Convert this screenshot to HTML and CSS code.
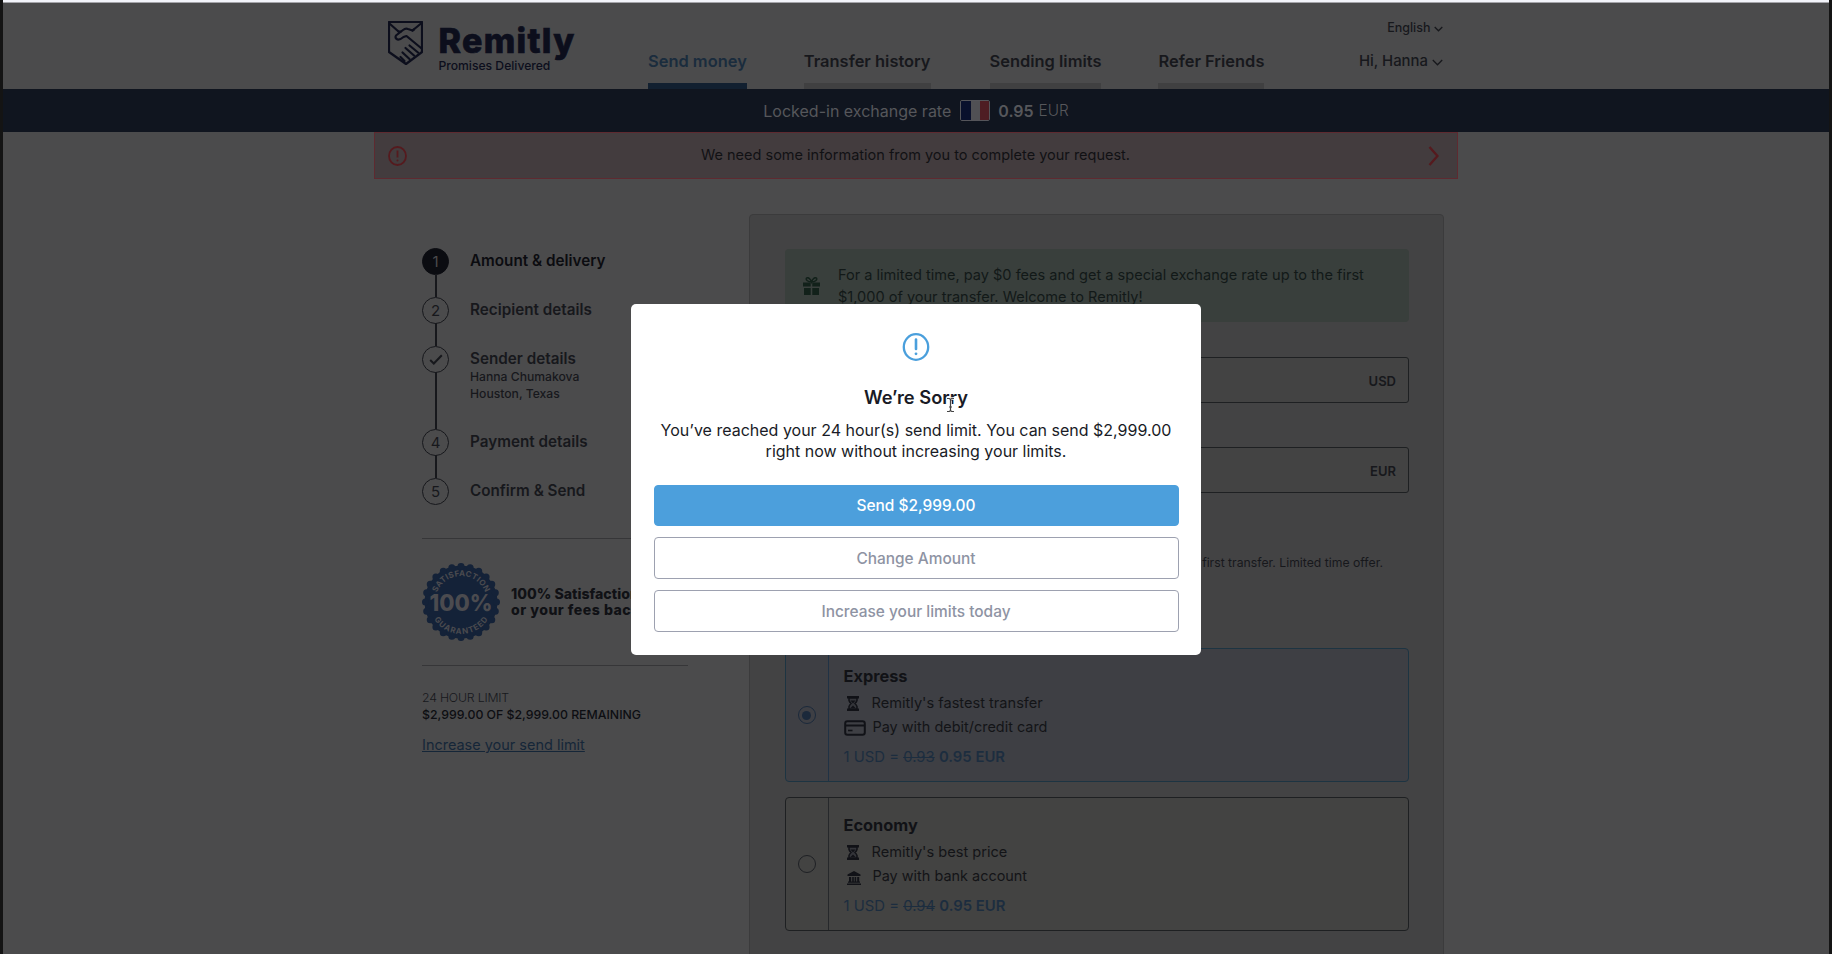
FILE: index.html
```html
<!DOCTYPE html>
<html lang="en">
<head>
<meta charset="utf-8">
<title>Remitly – Send money</title>
<link rel="stylesheet" href="styles.css">
</head>
<body>
<div class="page">
  <header class="header">
    <a class="logo">
      <svg class="logo-mark" viewBox="0 0 35 44" fill="none" stroke="#0c0e1c" stroke-width="2.200" stroke-linejoin="round" stroke-linecap="round">
        <path d="M1 1H34V31L18 43L1 31Z"/>
        <path d="M2 3L10.500 10.500M33 2.500L24.500 9.500L20 8Q17.500 7 15 9L8 14.500Q6.500 17 9.500 18.500Q12 19 15.500 16L18.500 15L33 27"/>
        <path d="M10.500 10.500L13 10.500M24.500 9.500L26 8.500M21.500 24.500L30 31.500M17.500 27L26 34.500M14.500 31.500L21.500 38M12.500 36L16.500 40"/>
      </svg>
      <span class="logo-text"><span class="logo-name">Remitly</span><span class="logo-tag">Promises Delivered</span></span>
    </a>
    <nav class="nav">
      <a class="nav-item active">Send money</a>
      <a class="nav-item">Transfer history</a>
      <a class="nav-item">Sending limits</a>
      <a class="nav-item">Refer Friends</a>
    </nav>
    <div class="account">
      <div class="language">English<svg viewBox="0 0 9 6" width="9" height="6" class="caret"><path d="M.7 1L4.500 4.800L8.300 1"/></svg></div>
      <div class="user">Hi, Hanna<svg viewBox="0 0 11 7" width="11" height="7" class="caret"><path d="M.8 1L5.500 5.800L10.200 1"/></svg></div>
    </div>
  </header>

  <div class="rate"><span class="rate-label">Locked-in exchange rate</span><span class="flag"><i class="blue"></i><i class="white"></i><i class="red"></i></span><b>0.95</b><span class="rate-cur">EUR</span></div>

  <div class="alert">
    <svg width="19" height="20" viewBox="0 0 19 20"><ellipse cx="9.500" cy="10" rx="8.500" ry="9" fill="none" stroke="#551a1e" stroke-width="1.800"/><path d="M9.500 4.500V11.500" stroke="#551a1e" stroke-width="1.800"/><circle cx="9.500" cy="14.500" r="1" fill="#551a1e"/></svg>
    <span class="alert-text">We need some information from you to complete your request.</span>
    <svg width="11" height="20" viewBox="0 0 11 20"><path d="M1.500 1L9.500 10L1.500 19" fill="none" stroke="#551a1e" stroke-width="2.400"/></svg>
  </div>

  <main class="main">
    <aside class="side">
      <ol class="steps">
        <li class="step current"><span class="num">1</span><div class="step-body"><h3>Amount &amp; delivery</h3></div></li>
        <li class="step"><span class="num">2</span><div class="step-body"><h3>Recipient details</h3></div></li>
        <li class="step tall"><span class="num"><svg width="14" height="11" viewBox="0 0 14 11"><path d="M1.200 6L4.800 9.500L12.800 1.200" fill="none" stroke="#17181c" stroke-width="2"/></svg></span><div class="step-body"><h3>Sender details</h3><p>Hanna Chumakova<br>Houston, Texas</p></div></li>
        <li class="step"><span class="num">4</span><div class="step-body"><h3>Payment details</h3></div></li>
        <li class="step last"><span class="num">5</span><div class="step-body"><h3>Confirm &amp; Send</h3></div></li>
      </ol>
      <div class="guarantee">
        <svg class="badge" viewBox="0 0 78 78" width="78" height="78">
          <defs>
            <path id="arcTop" d="M13 39A26 26 0 0 1 65 39"/>
            <path id="arcBottom" d="M7 39A32 32 0 0 0 71 39"/>
          </defs>
          <circle cx="39" cy="39" r="36.500" fill="#142238"/>
          <circle cx="39" cy="39" r="35.500" fill="none" stroke="#142238" stroke-width="7" stroke-linecap="round" pathLength="24" stroke-dasharray="0 1"/>
          <g fill="#4b4b4f" text-anchor="middle" class="badge-text">
            <text x="39" y="47.500" class="badge-num" textLength="63" lengthAdjust="spacingAndGlyphs">100%</text>
            <text class="badge-arc"><textPath href="#arcTop" startOffset="50%" textLength="62">SATISFACTION</textPath></text>
            <text class="badge-arc"><textPath href="#arcBottom" startOffset="50%" textLength="64">GUARANTEED</textPath></text>
          </g>
        </svg>
        <p>100% Satisfaction<br><span class="wide">or your fees back</span></p>
      </div>
      <div class="limit">
        <span class="limit-label">24 HOUR LIMIT</span>
        <span class="limit-value">$2,999.00 OF $2,999.00 REMAINING</span>
        <a class="limit-link">Increase your send limit</a>
      </div>
    </aside>

    <section class="card">
      <div class="promo">
        <svg width="17" height="18" viewBox="0 0 17 18" fill="#12211a"><path d="M0 5.500H7.700V9.500H0ZM9.300 5.500H17V9.500H9.300ZM1 11H7.700V18H1ZM9.300 11H16V18H9.300Z"/><path d="M8.500 5C5 5 2.500 3 3.500 1.200C5 -.3 7.500 2 8.500 5C9.500 2 12 -.3 13.500 1.200C14.500 3 12 5 8.500 5" fill="none" stroke="#12211a" stroke-width="1.500"/></svg>
        <p>For a limited time, pay $0 fees and get a special exchange rate up to the first $1,000 of your transfer. Welcome to Remitly!</p>
      </div>
      <div class="field send">USD</div>
      <div class="field receive">EUR</div>
      <p class="offer">Special rate on your first transfer. Limited time offer.</p>

      <div class="option selected">
        <div class="pick"><span class="radio"></span></div>
        <div class="option-body">
          <h2>Express</h2>
          <div class="line"><svg class="hourglass" width="12" height="15" viewBox="0 0 12 15"><use href="#hourglass"/></svg><span>Remitly's fastest transfer</span></div>
          <div class="line pay"><svg class="cardicon" width="22" height="16" viewBox="0 0 22 16"><rect x="1.200" y="1.200" width="19.600" height="13.600" rx="2.200" fill="none" stroke="#111217" stroke-width="2"/><path d="M1 5.500H21" stroke="#111217" stroke-width="2"/><path d="M4 10.500H8.500" stroke="#111217" stroke-width="1.600"/></svg><span>Pay with debit/credit card</span></div>
          <div class="price">1 USD = <s>0.93</s> <b>0.95 EUR</b></div>
        </div>
      </div>

      <div class="option">
        <div class="pick"><span class="radio"></span></div>
        <div class="option-body">
          <h2>Economy</h2>
          <div class="line"><svg class="hourglass" width="12" height="15" viewBox="0 0 12 15"><g id="hourglass"><path d="M0 0H12V2.600H0ZM0 12.400H12V15H0Z" fill="#111217"/><path d="M2 2V4.500Q2.500 6 4 7.500Q2.500 9 2 10.500V13H10V10.500Q9.500 9 8 7.500Q9.500 6 10 4.500V2Z" fill="#34353a" stroke="#111217" stroke-width="1.500"/><path d="M3.500 4.500H8.500L6 7.500ZM3.500 12L6 9.500L8.500 12Z" fill="#111217"/></g></svg><span>Remitly's best price</span></div>
          <div class="line pay"><svg class="bank" width="14" height="14" viewBox="0 0 14 14" fill="#111217"><path d="M7 0L13.500 3.500V5H.5V3.500ZM2 6H4.200V10.500H2ZM5.200 6H6.800V10.500H5.200ZM7.600 6H9.200V10.500H7.600ZM10.200 6H12.200V10.500H10.200ZM1 10.500H13V11.700H1ZM0 12.400H14V14H0Z"/></svg><span>Pay with bank account</span></div>
          <div class="price">1 USD = <s>0.94</s> <b>0.95 EUR</b></div>
        </div>
      </div>
    </section>
  </main>
</div>

<div class="modal" role="dialog">
  <svg class="modal-icon" width="28" height="32" viewBox="0 0 28 32"><ellipse cx="14" cy="16" rx="12.200" ry="12.800" fill="none" stroke="#4a9fdc" stroke-width="2.300"/><path d="M14 8.500V18" stroke="#4a9fdc" stroke-width="2.600" stroke-linecap="round"/><circle cx="14" cy="22.800" r="1.400" fill="#4a9fdc"/></svg>
  <h1>We’re Sorry</h1>
  <p>You’ve reached your 24 hour(s) send limit. You can send $2,999.00 right now without increasing your limits.</p>
  <button class="btn primary">Send $2,999.00</button>
  <button class="btn">Change Amount</button>
  <button class="btn">Increase your limits today</button>
  <svg class="cursor" width="9" height="16" viewBox="0 0 9 16" fill="none"><path d="M1 1.500H3.300L4.500 2.500L5.700 1.500H8M4.500 2.500V13.500M1 14.500H3.300L4.500 13.500L5.700 14.500H8" stroke="#fff" stroke-width="2.600"/><path d="M1 1.500H3.300L4.500 2.500L5.700 1.500H8M4.500 2.500V13.500M1 14.500H3.300L4.500 13.500L5.700 14.500H8M3 10H6" stroke="#444" stroke-width="1.200"/></svg>
</div>
</body>
</html>
```
FILE: styles.css
```css
* { box-sizing: border-box; margin: 0; padding: 0; }
body { width: 1832px; height: 954px; overflow: hidden; background: #141414; font-family: Inter, "Liberation Sans", sans-serif; color: #17181c; }
.page { height: 954px; margin: 0 3px; border-top: 2px solid #f3f4fa; background: #4b4b4c; overflow: hidden; box-shadow: inset 0 1px #a5a5aa; }

.header { display: flex; height: 87px; padding: 0 386px 0 385px; }
.logo { display: flex; width: 260px; padding-top: 19px; }
.logo-mark { width: 35px; height: 44px; }
.logo-text { display: flex; flex-direction: column; padding: 1px 0 0 15.500px; color: #0c0e1c; }
.logo-name { height: 33px; font-size: 34px; font-weight: 800; line-height: 37px; letter-spacing: 1.300px; white-space: nowrap; -webkit-text-stroke: .700px #0c0e1c; }
.logo-tag { font-size: 12.150px; font-weight: 500; line-height: 16px; white-space: nowrap; margin-top: 3px; height: 16px; }
.nav { display: flex; gap: 57px; align-items: flex-end; height: 87px; }
.nav-item { height: 47px; border-bottom: 6px solid #404041; font-size: 16.450px; font-weight: 600; line-height: 38px; white-space: nowrap; }
.nav-item:nth-child(3) { margin-left: 2px; }
.nav-item.active { color: #1a2c3d; border-color: #122030; }
.account { display: flex; flex-direction: column; align-items: flex-end; margin-left: auto; padding-top: 17px; font-weight: 500; }
.language { display: flex; align-items: center; gap: 3.500px; font-size: 12.500px; line-height: 18px; }
.user { display: flex; align-items: center; gap: 4px; margin-top: 14px; font-size: 14.900px; line-height: 20px; }
.caret { fill: none; stroke: #17181c; stroke-width: 1.300; margin-top: 2px; }

.rate { display: flex; justify-content: center; align-items: center; height: 43px; background: #10151f; color: #56575b; font-size: 16px; line-height: 42px; }
.rate b { font-weight: 600; margin-left: 8px; }
.rate-cur { font-weight: 300; font-size: 15.300px; margin-left: 5px; }
.flag { display: flex; width: 30px; height: 21px; margin-left: 9px; border: 1px solid #55555a; border-radius: 2px; overflow: hidden; }
.flag i { flex: 1; }
.flag .blue { background: #09102c; }
.flag .white { background: #505054; }
.flag .red { background: #4e1d23; }

.alert { display: flex; align-items: center; width: 1084px; height: 47px; margin: 0 auto; padding: 0 18px 0 13px; border: 1px solid #5e2a30; background: #433c3e; }
.alert-text { flex: 1; text-align: center; font-size: 14.500px; color: #111114; padding: 0 4px 2px 0; }

.main { display: flex; justify-content: space-between; width: 1022px; margin: 35px 0 0 419px; }
.side { width: 266px; padding-top: 34px; }
.steps { list-style: none; height: 290px; }
.step { position: relative; display: flex; gap: 22px; height: 49.200px; }
.step:not(.last)::before { content: ""; position: absolute; left: 13px; top: 26px; bottom: 0; width: 1.500px; background: #17181c; }
.step.tall { height: 82.500px; }
.num { display: flex; align-items: center; justify-content: center; width: 27px; height: 27px; border: 1.500px solid #17181c; border-radius: 50%; font-size: 15px; }
.step.current .num { background: #0b0c11; color: #4b4b4d; border-color: #0b0c11; }
.step-body { margin-left: -1px; }
.step-body h3 { font-size: 15.250px; font-weight: 600; line-height: 22px; padding-top: 2px; white-space: nowrap; }
.step.current h3 { color: #0b0c10; }
.step-body p { margin-top: -2px; font-size: 12.170px; font-weight: 500; line-height: 17px; }
.guarantee { display: flex; align-items: center; gap: 11px; height: 128px; border-top: 1px solid #363638; border-bottom: 1px solid #363638; color: #101115; }
.guarantee p { font-size: 14.140px; font-weight: 800; line-height: 16.500px; white-space: nowrap; }
.guarantee .wide { letter-spacing: .480px; }
.badge { flex: none; }
.badge-text { font-weight: 800; }
.badge-num { font-size: 23px; }
.badge-arc { font-size: 8px; font-weight: 700; }
.limit { display: flex; flex-direction: column; padding-top: 23px; }
.limit-label { font-size: 12.300px; font-weight: 300; line-height: 17px; letter-spacing: -.2px; }
.limit-value { font-size: 12.300px; font-weight: 500; line-height: 17px; color: #0d0e12; white-space: nowrap; }
.limit-link { margin-top: 12px; font-size: 14.480px; line-height: 20px; color: #152638; text-decoration: underline; }

.card { width: 695px; height: 800px; padding: 34px 34px 0 35px; border: 1px solid #3b3b3c; border-radius: 4px; background: #434344; }
.promo { display: flex; align-items: center; height: 73px; padding-left: 18px; border-radius: 4px; background: #393f3c; }
.promo p { width: 545px; margin-left: 18px; font-size: 14.550px; line-height: 22px; color: #121918; }
.promo svg { flex: none; }
.field { display: flex; align-items: center; justify-content: flex-end; height: 46px; padding: 1px 12px 0 0; border: 1px solid #1e2022; border-radius: 3px; background: #434343; font-size: 13px; font-weight: 600; }
.send { margin-top: 35px; }
.receive { margin-top: 44px; }
.offer { margin-top: 59px; padding-right: 26px; text-align: right; font-size: 12.230px; line-height: 22px; }
.option { display: flex; height: 134px; margin-top: 15px; border: 1px solid #1e2022; border-radius: 4px; background: #434342; }
.option.selected { margin-top: 74px; border-color: #1d3442; background: #3e3f44; }
.pick { display: flex; align-items: center; justify-content: center; width: 42.500px; border-right: 1.500px solid #26282b; }
.selected .pick { border-color: #203245; }
.radio { display: flex; align-items: center; justify-content: center; width: 18px; height: 18px; border: 1.500px solid #1e2024; border-radius: 50%; }
.selected .radio { border-color: #1b293b; }
.selected .radio::after { content: ""; width: 9px; height: 9px; border-radius: 50%; background: #1b293b; }
.option-body { padding: 14px 0 0 15px; }
.option h2 { font-size: 16.350px; font-weight: 700; line-height: 26px; margin-bottom: 2px; color: #111216; }
.line { display: flex; align-items: center; height: 24px; font-size: 14.600px; line-height: 24px; color: #131417; }
.hourglass { margin: 1px 13px 0 3px; }
.pay { font-size: 14.450px; }
.cardicon { margin: 2px 7px 0 0; }
.bank { margin: 3px 12px 0 3px; }
.price { margin-top: 6px; font-size: 14.850px; line-height: 24px; color: #1c2d3f; }
.price b { font-weight: 600; }

.modal { position: absolute; left: 631px; top: 304px; width: 570px; height: 351px; display: flex; flex-direction: column; align-items: center; padding: 26px 22px 0; border-radius: 5px; background: #fff; color: #191b26; }
.modal-icon { display: block; margin-top: 1px; }
.modal h1 { margin-top: 21px; font-size: 18.270px; font-weight: 600; line-height: 26px; }
.modal p { width: 520px; margin-top: 10px; font-size: 16px; line-height: 21px; text-align: center; }
.btn { flex: none; width: 525px; height: 42px; margin-top: 11px; border: 1px solid #9da1b0; border-radius: 4px; background: #fff; color: #8e93a3; font: 500 15.450px Inter, "Liberation Sans", sans-serif; }
.btn.primary { margin-top: 23px; height: 41px; border-color: #4c9fdc; background: #4c9fdc; color: #fff; }
.cursor { position: absolute; left: 315px; top: 93px; }
```
